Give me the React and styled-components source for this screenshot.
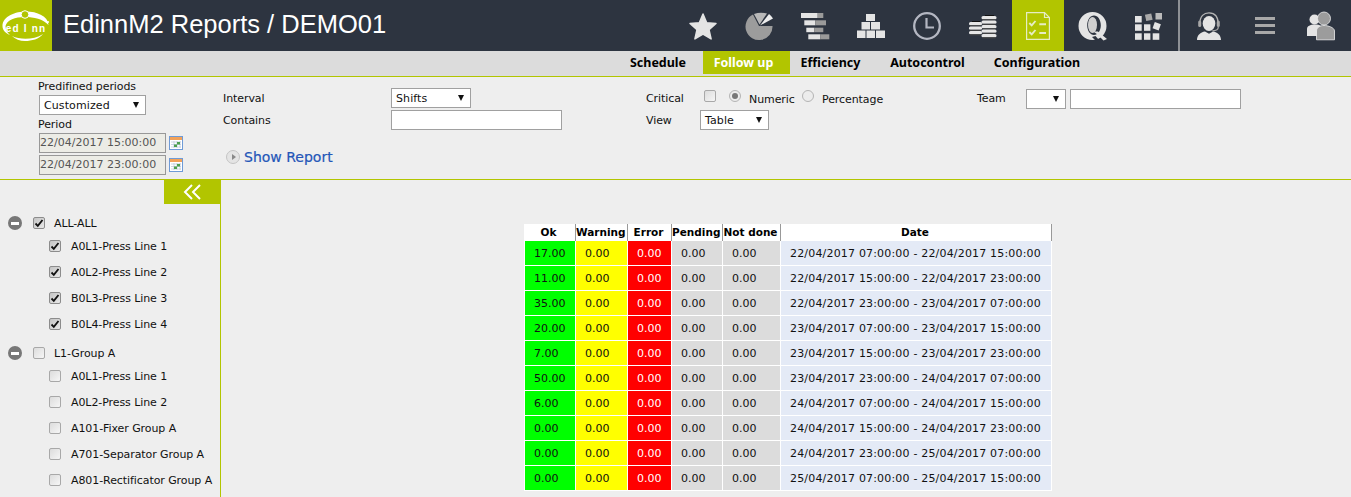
import React from "react";
import styled, { createGlobalStyle } from "styled-components";

const OLIVE = "#b2c500";
const TEXT_FONT = '"DejaVu Sans", "Noto Sans", sans-serif';

const Global = createGlobalStyle`
  html, body { margin: 0; padding: 0; height: 497px; overflow: hidden; background: #eeeeee; }
  * { box-sizing: border-box; }
  body { font-family: ${TEXT_FONT}; font-size: 11px; letter-spacing: -0.08px; color: #111; }
`;

const Page = styled.div`
  width: 1351px; height: 497px; overflow: hidden; display: flex; flex-direction: column;
`;
const Header = styled.header`
  height: 51px; flex: none; background: #2d3440; display: flex; align-items: stretch; padding-right: 2px;
`;
const LogoBox = styled.div`
  width: 52px; background: ${OLIVE}; display: flex; align-items: center; justify-content: center;
`;
const Title = styled.h1`
  margin: 0 0 0 11px; flex: 1; font: 400 25.5px/49px "Liberation Sans", Arial, sans-serif; letter-spacing: 0; color: #fff; white-space: nowrap;
`;
const IconButton = styled.div`
  width: ${p => (p.$active ? 52 : 56)}px;
  margin: ${p => (p.$active ? "0 1px" : "0")};
  background: ${p => (p.$active ? OLIVE : "transparent")};
  display: flex; align-items: center; justify-content: center;
`;
const HeaderSep = styled.div`
  width: 2px; margin: 0 1px; background: #8e9196;
`;
const SubNav = styled.nav`
  height: 26px; flex: none; background: #dcdcdc; border-bottom: 1px solid ${OLIVE};
  display: flex; align-items: flex-start; padding-left: 613px;
`;
const Tab = styled.a`
  height: 23px; width: ${p => p.$w}px; text-align: center; padding-right: ${p => (p.$active ? 6 : 0)}px;
  font: 700 12.5px/23px "Noto Sans", "DejaVu Sans", sans-serif; letter-spacing: 0;
  color: ${p => (p.$active ? "#fff" : "#000")};
  background: ${p => (p.$active ? OLIVE : "transparent")};
`;
const FilterBar = styled.section`
  height: 103px; flex: none; background: #eeeeee; border-bottom: 1px solid #b2c500;
  display: flex; padding-left: 38px;
`;
const PeriodCol = styled.div`
  width: 185px; display: flex; flex-direction: column; padding-top: 1px;
`;
const FieldLabel = styled.div`
  line-height: 17px; height: 17px; white-space: nowrap; margin-top: ${p => p.$top || 0}px;
`;
const DateRow = styled.div`
  display: flex; align-items: center; gap: 3px; margin: 0 0 2px 1px;
`;
const DateInput = styled.div`
  width: 127px; height: 20px; border: 1px solid #989898; background: #ecece6; color: #555;
  line-height: 18px; white-space: nowrap; letter-spacing: 0;
`;
const SelectBox = styled.div`
  width: ${p => p.$w}px; height: 20px; border: 1px solid #a0a0a0; background: #fff; flex: none;
  margin-left: ${p => p.$ml || 0}px;
  display: flex; align-items: center; justify-content: space-between; padding: 0 6px 0 4px; white-space: nowrap; letter-spacing: 0.1px;
`;
const Arrow = styled.span`
  width: 0; height: 0; border-left: 3.5px solid transparent; border-right: 3.5px solid transparent; border-top: 6px solid #111;
`;
const TextBox = styled.div`
  width: ${p => p.$w}px; height: 20px; border: 1px solid #a0a0a0; background: #fff;
`;
const MidCol = styled.div`
  width: 423px; padding-top: 11px; display: flex; flex-direction: column; gap: 2px;
`;
const FormRow = styled.div`
  display: flex; align-items: center; height: 20px;
`;
const RowLabel = styled.div`
  width: ${p => p.$w}px; flex: none;
`;
const ShowReport = styled.div`
  display: flex; align-items: center; gap: 4px; margin-top: 15px; margin-left: 3px;
  font: 400 14px/20px "DejaVu Sans", sans-serif; letter-spacing: 0; color: #2456b8; -webkit-text-stroke: 0.2px #2456b8;
`;
const PlayIcon = styled.span`
  width: 14px; height: 14px; border-radius: 50%; background: #e4e4e4; border: 1px solid #c4c4c4;
  display: flex; align-items: center; justify-content: center;
  &::after { content: ""; border-left: 4px solid #888; border-top: 3.5px solid transparent; border-bottom: 3.5px solid transparent; margin-left: 1px; }
`;
const CritCol = styled.div`
  width: 331px; padding-top: 11px; display: flex; flex-direction: column; gap: 2px;
`;
const TeamCol = styled.div`
  padding-top: 12px; display: flex; gap: 4px; align-items: flex-start;
`;
const TeamLabel = styled.div`
  width: 45px; line-height: 20px;
`;
const Check = styled.span`
  width: 12px; height: 12px; flex: none; border: 1px solid ${p => (p.$on ? "#8c8c8c" : "#a8a8a8")}; border-radius: 2px;
  background: ${p => (p.$on ? "linear-gradient(135deg, #c4c4c4, #e8e8e8)" : "linear-gradient(135deg, #dcdcdc, #f6f6f6)")};
  display: inline-flex; align-items: center; justify-content: center;
  margin-bottom: ${p => p.$raise || 0}px;
`;
const Radio = styled.span`
  width: 12px; height: 12px; flex: none; border: 1px solid #b4b4b4; border-radius: 50%;
  background: #ececec; display: inline-flex; align-items: center; justify-content: center;
  margin: 0 8px 4px ${p => p.$ml}px;
  &::after { content: ""; width: 6px; height: 6px; border-radius: 50%; background: ${p => (p.$on ? "#777" : "transparent")}; }
`;
const OptionText = styled.span`
  width: ${p => p.$w}px; flex: none; margin-top: 2px; white-space: nowrap;
`;
const Body = styled.div`
  flex: 1; display: flex; min-height: 0;
`;
const Sidebar = styled.aside`
  width: 221px; flex: none; border-right: 1px solid ${OLIVE}; display: flex; flex-direction: column; align-items: stretch;
`;
const Collapse = styled.div`
  align-self: flex-end; width: 56px; height: 24px; background: ${OLIVE}; display: flex; align-items: center; justify-content: center;
`;
const Tree = styled.div`
  padding: 9px 0 0 8px;
`;
const TreeRow = styled.div`
  height: ${p => (p.$child ? 26 : 20)}px; display: flex; align-items: center; white-space: nowrap;
  padding-left: ${p => (p.$child ? 41 : 0)}px;
  margin-top: ${p => (p.$group ? 6 : 0)}px;
`;
const Minus = styled.span`
  width: 14px; height: 14px; border-radius: 50%; background: #777; margin-right: 11px; flex: none;
  display: flex; align-items: center; justify-content: center;
  &::after { content: ""; width: 8px; height: 3px; background: #fff; }
`;
const TreeText = styled.span`
  margin-left: ${p => (p.$child ? 10 : 9)}px;
`;
const Main = styled.main`
  flex: 1; padding: 44px 0 0 303px;
`;
const Table = styled.div`
  width: 528px; display: grid; grid-template-columns: 52px 52px 44px 51px 58px 271px;
`;
const HeadCell = styled.div`
  height: 17px; background: #fff; border-right: 1px solid #999; text-align: center; padding-right: 2px;
  font: 700 10.5px/17px "DejaVu Sans", sans-serif; letter-spacing: 0; color: #000; white-space: nowrap;
`;
const Cell = styled.div`
  height: 25px; line-height: 25px; background: ${p => p.$bg}; color: ${p => p.$fg || "#111"};
  box-shadow: ${p => (p.$first ? "inset 1px 0 #fff, " : "")}inset -1px 0 #fff, inset 0 -1px #fff;
  padding-left: ${p => (p.$first ? 10 : 9)}px; white-space: nowrap;
  letter-spacing: ${p => (p.$wide ? "0.18px" : "0")};
`;

const Gray = "#e4e4e4";

const Star = () => (
  <svg width="30" height="30" viewBox="0 0 30 30">
    <path d="M15 3l3.700 8.700 9.300.8-7 6.200 2.100 9.200L15 23l-8.100 4.900L9 18.700l-7-6.200 9.300-.8z" fill={Gray} stroke={Gray} strokeWidth="1.500" strokeLinejoin="round" />
  </svg>
);
const Pie = () => (
  <svg width="30" height="30" viewBox="0 0 30 30">
    <path d="M15 15 9 3.500A13.500 13.500 0 1 0 28.500 15z" fill="#9c9c9c" />
    <path d="M15.500 13.500 10 3Q16 1 23 2.500z" fill="#b8b8b8" />
    <path d="M16 14.500 25 3Q27.500 5 29 7.500z" fill="#eee" />
  </svg>
);
const Gantt = () => (
  <svg width="30" height="30" viewBox="0 0 30 30">
    <rect x="1" y="2" width="16.700" height="5" fill={Gray} /><rect x="17.700" y="2" width="5.600" height="5" fill="#9a9a9a" />
    <rect x="4.300" y="9.300" width="11" height="5" fill={Gray} /><rect x="15.300" y="9.300" width="10.700" height="5" fill="#9a9a9a" />
    <rect x="6.300" y="16.700" width="8" height="4.500" fill={Gray} /><rect x="14.300" y="16.700" width="9" height="4.500" fill="#9a9a9a" />
    <rect x="8.300" y="23.300" width="12" height="5" fill={Gray} /><rect x="20.300" y="23.300" width="9" height="5" fill="#9a9a9a" />
  </svg>
);
const Pyramid = () => (
  <svg width="30" height="30" viewBox="0 0 30 30" fill={Gray}>
    <rect x="10" y="3" width="9" height="7" />
    <rect x="5.500" y="11" width="8.500" height="7.500" /><rect x="15" y="11" width="9" height="7.500" />
    <rect x="1" y="19.500" width="8.500" height="7.500" /><rect x="10.500" y="19.500" width="8.500" height="7.500" /><rect x="20" y="19.500" width="9" height="7.500" />
  </svg>
);
const Clock = () => (
  <svg width="30" height="30" viewBox="0 0 30 30" fill="none" stroke="#b4b7c2">
    <circle cx="15" cy="15" r="12.800" strokeWidth="2.300" />
    <path d="M14.500 7v9.500h7.500" strokeWidth="2.200" />
  </svg>
);
const Coins = () => {
  const stack = (x, ys, w) => ys.map(y => (
    <g key={x + "-" + y}>
      <rect x={x} y={y} width={w} height="3.300" rx="1.500" fill="#e6e6e6" />
      <rect x={x + 1} y={y + 3.300} width={w - 2} height="1.100" fill="#444" />
    </g>
  ));
  return (
    <svg width="30" height="30" viewBox="0 0 30 30">
      <rect x="4" y="10" width="8" height="1.500" fill="#111" />
      {stack(1, [11, 15.500, 20], 13)}
      <rect x="17" y="4" width="9" height="1.500" fill="#111" />
      {stack(13.500, [5, 9.500, 14, 18.500, 23], 15)}
    </svg>
  );
};
const Checklist = () => (
  <svg width="24" height="28" viewBox="0 0 24 28" fill="none" stroke="#e6edc4" strokeWidth="1.200">
    <path d="M.6.6H18.500L23.400 5.500V27.400H.6z" /><path d="M18.500.6v4.900h4.900" />
    <path d="M3.300 11l2.400 2.400L9.500 9M3.300 20l2.400 2.400L9.500 18" strokeWidth="1.900" />
    <path d="M13.300 12.300h6.700M13.300 21h6.700" strokeWidth="1.900" />
  </svg>
);
const QLogo = () => (
  <svg width="30" height="30" viewBox="0 0 30 30">
    <path fillRule="evenodd" d="M14.500 1a14 14 0 1 0 0 28 14 14 0 0 0 0-28zM16 4.500c-3.800 0-6.800 4.200-6.800 9.800 0 5.500 3 9.700 6.800 9.700s6.800-4.200 6.800-9.700c0-5.600-3-9.800-6.800-9.800z" fill={Gray} />
    <ellipse cx="14.500" cy="14" rx="4.500" ry="8" fill="#cfcfcf" />
    <path d="M15 20.500h5l9 7.500-3.500 1.500-5-5c-2-1.700-3.500-3-5.500-4z" fill={Gray} />
    <path d="M17.500 25l3.500 4-3.500.5-3.500-3.500z" fill="#2d3440" />
  </svg>
);
const Apps = () => (
  <svg width="28" height="30" viewBox="0 0 28 30" fill={Gray}>
    <rect x="0" y="5" width="6.700" height="6.500" /><rect x="0" y="13.300" width="6.700" height="6.500" /><rect x="0" y="22.300" width="6.700" height="6.500" />
    <rect x="9" y="13.300" width="6.400" height="6.500" /><rect x="9" y="22.300" width="6.400" height="6.500" /><rect x="17.700" y="22.300" width="6.600" height="6.500" />
    <rect x="10.500" y="3" width="6.500" height="6.500" fill="#a8a8a8" transform="rotate(-12 13.700 6.200)" />
    <rect x="20.500" y="2" width="6.500" height="6.500" fill="#bbb" />
    <rect x="18.500" y="12" width="6.500" height="6.500" transform="rotate(20 21.700 15.200)" />
  </svg>
);
const Agent = () => (
  <svg width="24" height="28" viewBox="0 0 24 28">
    <ellipse cx="12" cy="11.500" rx="6.300" ry="7.500" fill={Gray} />
    <path d="M2.800 12C2.800 4 7 .8 12 .8S21.200 4 21.200 12" fill="none" stroke="#b4b4b4" strokeWidth="1.300" />
    <rect x="1.200" y="8.500" width="3" height="6.500" rx="1.500" fill="#a8a8a8" /><rect x="19.800" y="8.500" width="3" height="6.500" rx="1.500" fill="#a8a8a8" />
    <path d="M21.300 15c0 2.500-2.500 3.800-6 3.800" fill="none" stroke="#a8a8a8" strokeWidth="1.200" />
    <path d="M0 28c0-5 3.500-7.800 8-8.500l4 2.200 4-2.200c4.500.7 8 3.500 8 8.500z" fill={Gray} />
  </svg>
);
const Burger = () => (
  <svg width="20" height="17" viewBox="0 0 20 17" fill="#a8a8a8">
    <rect y="0" width="20" height="3" /><rect y="7" width="20" height="3" /><rect y="14" width="20" height="3" />
  </svg>
);
const Users = () => (
  <svg width="30" height="30" viewBox="0 0 30 30">
    <circle cx="8.500" cy="8.500" r="5" fill={Gray} />
    <path d="M1 25V18c0-3 3-4.500 8-4.500s8 2 8 5v6.500z" fill={Gray} />
    <circle cx="18" cy="7.500" r="6.500" fill="#9c9c9c" stroke="#eee" strokeWidth="0.800" />
    <path d="M10.500 28.800V20c0-3.500 3.500-5.500 7.500-5.500s10.500 2 10.500 5.500v8.800z" fill="#9c9c9c" stroke="#eee" strokeWidth="0.800" />
  </svg>
);
const Logo = () => (
  <svg width="48" height="32" viewBox="0 0 48 32">
    <path d="M.5 16C.5 6 14 1.500 24 1.500 35 1.500 46 6 46.500 15 41 9 32 7 23 7 13 7 5 10 3.500 16c0 4 2 7 4.500 9C3 23 .5 20 .5 16z" fill="#fff" />
    <path d="M10 26c8 4 22 4 31-2-4 5-11 7-18 7-5 0-10-2-13-5z" fill="#fff" />
    <circle cx="23" cy="4.500" r="3.800" fill={OLIVE} stroke="#fff" strokeWidth="1" />
    <circle cx="46" cy="12" r="1" fill="#fff" />
    <text x="24" y="22" textAnchor="middle" fontFamily="Liberation Sans, sans-serif" fontWeight="700" fontSize="10" fill="#fff" letterSpacing="1.200">ed I nn</text>
  </svg>
);
const Tick = () => (
  <svg width="10" height="10" viewBox="0 0 10 10"><path d="M1.500 5.500l2.300 2.300L8.500 2" fill="none" stroke="#111" strokeWidth="1.800" /></svg>
);
const CalIcon = () => (
  <svg width="14" height="14" viewBox="0 0 14 14">
    <rect x="0.500" y="0.500" width="13" height="13" fill="#fff" stroke="#6f9bd6" />
    <rect x="1" y="1" width="12" height="3" fill="#f2a25a" />
    <path d="M2 6h10M2 8.500h10M2 11h10M5 5v7M8 5v7M11 5v7" stroke="#b8c6d8" strokeWidth="0.700" />
    <rect x="8" y="6" width="3" height="2.500" fill="#4da04d" /><rect x="5" y="8.500" width="3" height="2.500" fill="#4da04d" />
  </svg>
);
const Chevrons = () => (
  <svg width="18" height="16" viewBox="0 0 18 16" fill="none" stroke="#fff" strokeWidth="2">
    <path d="M9 1 2 8l7 7M17 1l-7 7 7 7" />
  </svg>
);

const TABS = [
  ["Schedule", 90], ["Follow up", 87, true], ["Efficiency", 81], ["Autocontrol", 113], ["Configuration", 106],
];
const TREE = [
  { t: "ALL-ALL", on: true, root: true },
  { t: "A0L1-Press Line 1", on: true }, { t: "A0L2-Press Line 2", on: true },
  { t: "B0L3-Press Line 3", on: true }, { t: "B0L4-Press Line 4", on: true },
  { t: "L1-Group A", root: true },
  { t: "A0L1-Press Line 1" }, { t: "A0L2-Press Line 2" },
  { t: "A101-Fixer Group A" }, { t: "A701-Separator Group A" }, { t: "A801-Rectificator Group A" },
];
const ROWS = [
  ["17.00", "22/04/2017 07:00:00 - 22/04/2017 15:00:00"],
  ["11.00", "22/04/2017 15:00:00 - 22/04/2017 23:00:00"],
  ["35.00", "22/04/2017 23:00:00 - 23/04/2017 07:00:00"],
  ["20.00", "23/04/2017 07:00:00 - 23/04/2017 15:00:00"],
  ["7.00", "23/04/2017 15:00:00 - 23/04/2017 23:00:00"],
  ["50.00", "23/04/2017 23:00:00 - 24/04/2017 07:00:00"],
  ["6.00", "24/04/2017 07:00:00 - 24/04/2017 15:00:00"],
  ["0.00", "24/04/2017 15:00:00 - 24/04/2017 23:00:00"],
  ["0.00", "24/04/2017 23:00:00 - 25/04/2017 07:00:00"],
  ["0.00", "25/04/2017 07:00:00 - 25/04/2017 15:00:00"],
];

export default function App() {
  return (
    <Page>
      <Global />
      <Header>
        <LogoBox><Logo /></LogoBox>
        <Title>EdinnM2 Reports / DEMO01</Title>
        <IconButton><Star /></IconButton>
        <IconButton><Pie /></IconButton>
        <IconButton><Gantt /></IconButton>
        <IconButton><Pyramid /></IconButton>
        <IconButton><Clock /></IconButton>
        <IconButton><Coins /></IconButton>
        <IconButton $active><Checklist /></IconButton>
        <IconButton><QLogo /></IconButton>
        <IconButton><Apps /></IconButton>
        <HeaderSep />
        <IconButton><Agent /></IconButton>
        <IconButton><Burger /></IconButton>
        <IconButton><Users /></IconButton>
      </Header>
      <SubNav>
        {TABS.map(([t, w, a]) => <Tab key={t} $w={w} $active={a}>{t}</Tab>)}
      </SubNav>
      <FilterBar>
        <PeriodCol>
          <FieldLabel>Predifined periods</FieldLabel>
          <SelectBox $w={107} $ml={1}>Customized<Arrow /></SelectBox>
          <FieldLabel $top={1}>Period</FieldLabel>
          <DateRow><DateInput>22/04/2017 15:00:00</DateInput><CalIcon /></DateRow>
          <DateRow><DateInput>22/04/2017 23:00:00</DateInput><CalIcon /></DateRow>
        </PeriodCol>
        <MidCol>
          <FormRow><RowLabel $w={168}>Interval</RowLabel><SelectBox $w={80}>Shifts<Arrow /></SelectBox></FormRow>
          <FormRow><RowLabel $w={168}>Contains</RowLabel><TextBox $w={171} /></FormRow>
          <ShowReport><PlayIcon />Show Report</ShowReport>
        </MidCol>
        <CritCol>
          <FormRow>
            <RowLabel $w={58}>Critical</RowLabel><Check $raise={4} />
            <Radio $on $ml={13} /><OptionText $w={45}>Numeric</OptionText>
            <Radio $ml={8} /><OptionText $w={64}>Percentage</OptionText>
          </FormRow>
          <FormRow><RowLabel $w={54}>View</RowLabel><SelectBox $w={69}>Table<Arrow /></SelectBox></FormRow>
        </CritCol>
        <TeamCol>
          <TeamLabel>Team</TeamLabel>
          <SelectBox $w={40}><span /><Arrow /></SelectBox>
          <TextBox $w={171} />
        </TeamCol>
      </FilterBar>
      <Body>
        <Sidebar>
          <Collapse><Chevrons /></Collapse>
          <Tree>
            {TREE.map((r, i) => (
              <TreeRow key={i} $child={!r.root} $group={r.root && i > 0}>
                {r.root && <Minus />}
                <Check $on={r.on}>{r.on && <Tick />}</Check>
                <TreeText $child={!r.root}>{r.t}</TreeText>
              </TreeRow>
            ))}
          </Tree>
        </Sidebar>
        <Main>
          <Table>
            {["Ok", "Warning", "Error", "Pending", "Not done", "Date"].map(h => <HeadCell key={h}>{h}</HeadCell>)}
            {ROWS.map(([ok, d]) => (
              <React.Fragment key={d}>
                <Cell $bg="#00ff00" $first>{ok}</Cell>
                <Cell $bg="#ffff00">0.00</Cell>
                <Cell $bg="#ff0000" $fg="#fff">0.00</Cell>
                <Cell $bg="#dcdcdc">0.00</Cell>
                <Cell $bg="#dcdcdc">0.00</Cell>
                <Cell $bg="#e4eaf6" $wide>{d}</Cell>
              </React.Fragment>
            ))}
          </Table>
        </Main>
      </Body>
    </Page>
  );
}
